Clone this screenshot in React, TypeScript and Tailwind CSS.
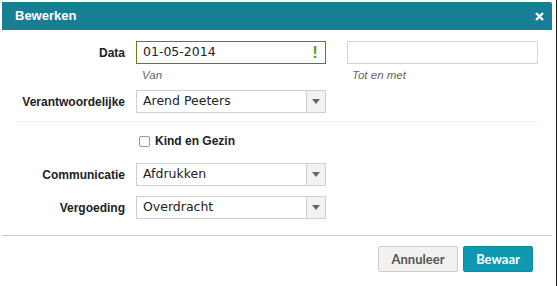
import React from "react";

const Caret = () => (
  <div className="w-[19px] h-full border-l border-[#cfcfcf] bg-[#f2f2f2] flex items-center justify-center">
    <svg width="8" height="5" viewBox="0 0 8 5"><path d="M0 0h8L4 5z" fill="#666" /></svg>
  </div>
);

const Select = ({ value }: { value: string }) => (
  <div className="w-[190px] h-[23px] border border-[#cfcfcf] bg-white flex items-stretch">
    <div className="flex-1 pl-[6px] flex items-center text-[12.5px] text-[#222]" style={{ fontFamily: '"DejaVu Sans", sans-serif' }}>{value}</div>
    <Caret />
  </div>
);

const Label = ({ children }: { children: React.ReactNode }) => (
  <div className="w-[123px] text-right text-[12px] font-bold text-[#222] pr-0" style={{ fontFamily: '"Liberation Sans", Arial, sans-serif' }}>{children}</div>
);

export default function App() {
  return (
    <div className="w-[558px] h-[286px] bg-white relative overflow-hidden" style={{ fontFamily: '"Liberation Sans", Arial, sans-serif' }}>
      <div className="absolute right-[1px] top-0 w-[1px] h-[286px] bg-[#222]" />
      <div className="w-[550px] ml-[2px] pt-[2px]">
        <div className="h-[28px] bg-[#177f93] flex items-center justify-between pl-[13px] pr-[8px] rounded-tr-[2px]">
          <span className="text-white font-bold text-[13px]">Bewerken</span>
          <svg width="9" height="9" viewBox="0 0 9 9"><path d="M1 1L8 8M8 1L1 8" stroke="#fff" strokeWidth="2.4" /></svg>
        </div>
        <div className="pt-[11px]">
          <div className="flex items-start">
            <div className="h-[23px] flex items-center"><Label>Data</Label></div>
            <div className="ml-[11px] w-[190px]">
              <div className="h-[23px] border border-[#5d7f1d] flex items-center justify-between pl-[6px] pr-[7px]">
                <span className="text-[12.5px] text-[#222]" style={{ fontFamily: '"DejaVu Sans", sans-serif' }}>01-05-2014</span>
                <span className="text-[#6b9a16] font-bold text-[17px] leading-none">!</span>
              </div>
              <div className="mt-[3px] pl-[6px] text-[11.5px] italic text-[#666]">Van</div>
            </div>
            <div className="ml-[21px] w-[191px]">
              <div className="h-[23px] border border-[#d3d3d3]" />
              <div className="mt-[3px] pl-[5px] text-[11.5px] italic text-[#666]">Tot en met</div>
            </div>
          </div>
          <div className="flex items-center mt-[6px]">
            <Label>Verantwoordelijke</Label>
            <div className="ml-[11px]"><Select value="Arend Peeters" /></div>
          </div>
          <div className="mt-[8px] ml-[13px] w-[523px] h-[1px] bg-[#efefef]" />
          <div className="flex items-center mt-[13px] ml-[137px] h-[12px]">
            <div className="w-[11px] h-[11px] border border-[#9a9a9a] rounded-[2px] bg-white" />
            <span className="ml-[5px] text-[12px] font-bold text-[#222]">Kind en Gezin</span>
          </div>
          <div className="flex items-center mt-[16px]">
            <Label>Communicatie</Label>
            <div className="ml-[11px]"><Select value="Afdrukken" /></div>
          </div>
          <div className="flex items-center mt-[10px]">
            <Label>Vergoeding</Label>
            <div className="ml-[11px]"><Select value="Overdracht" /></div>
          </div>
        </div>
        <div className="mt-[16px] h-[1px] bg-[#cccccc]" />
        <div className="flex justify-end pr-[19px] pt-[10px] gap-[5px]">
          <button className="w-[80px] h-[26px] bg-[#f1f1f1] border border-[#cccccc] rounded-[2px] text-[13px] font-bold text-[#555]" style={{ fontFamily: 'Lato, sans-serif' }}>Annuleer</button>
          <button className="w-[70px] h-[26px] bg-[#0f99b1] border border-[#0c8aa0] rounded-[2px] text-[13px] font-bold text-white" style={{ fontFamily: 'Lato, sans-serif' }}>Bewaar</button>
        </div>
      </div>
    </div>
  );
}
